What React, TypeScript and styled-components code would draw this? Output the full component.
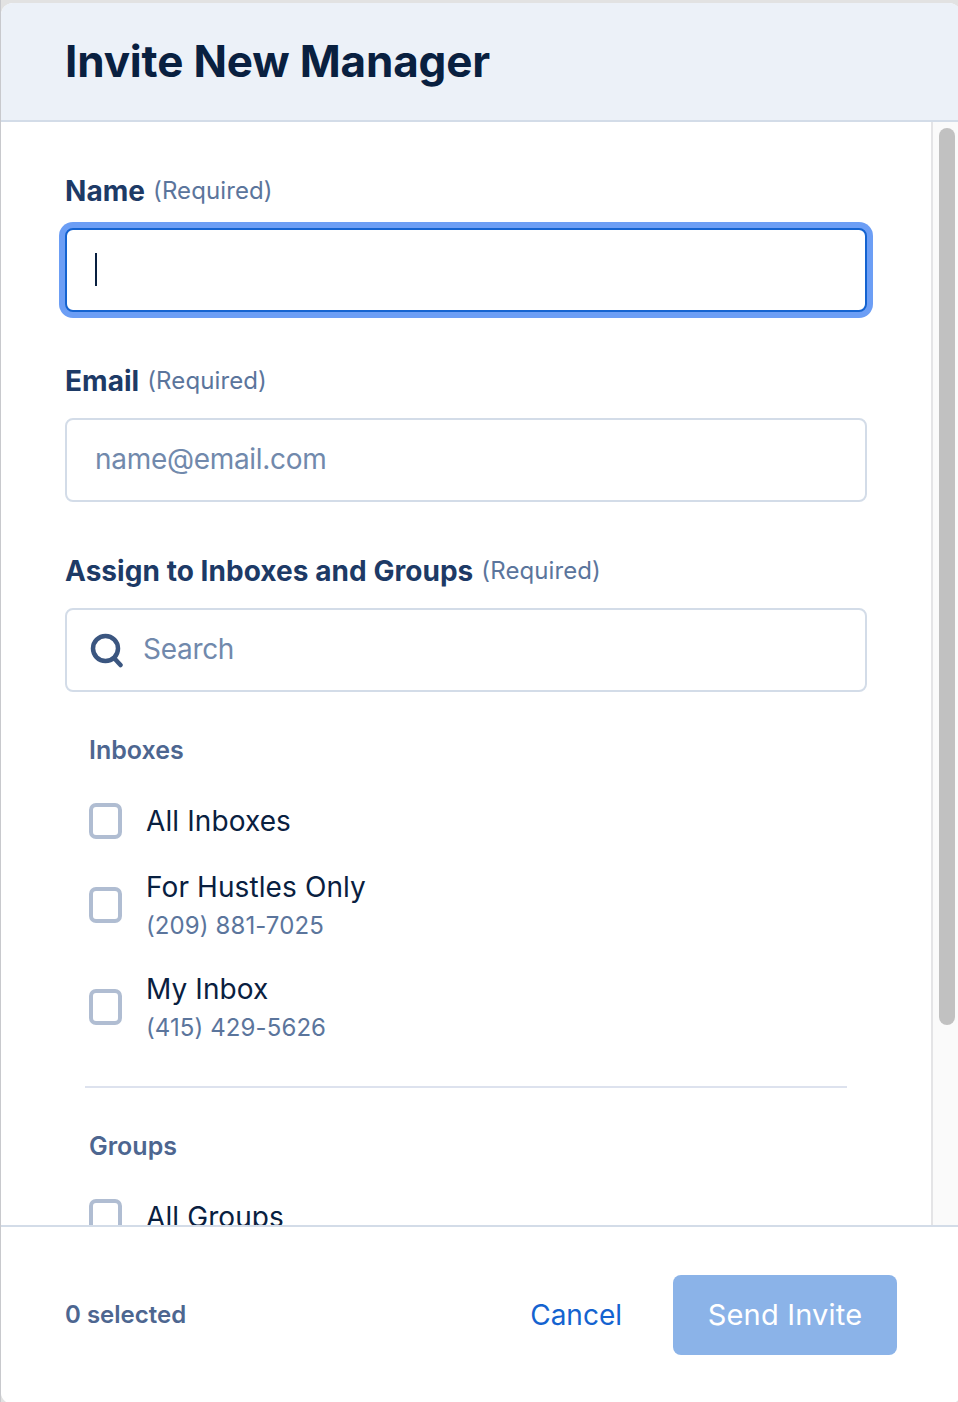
import React from "react";
import styled, { createGlobalStyle } from "styled-components";

const GlobalStyle = createGlobalStyle`
    html, body {
        margin: 0;
        padding: 0;
        height: 1402px;
        overflow: hidden;
        background-color: #e2e2e2;
        font-family: Inter, "Noto Sans", sans-serif;
    }
    * {
        box-sizing: border-box;
    }
`;

const Page = styled.div`
    height: 1402px;
    padding-top: 3px;
    border-left: 1px solid #c8c9cd;
    overflow: hidden;
`;

const Modal = styled.div`
    display: flex;
    flex-direction: column;
    width: 960px;
    height: 1401px;
    background-color: #fff;
    border-radius: 12px;
    overflow: hidden;
`;

const Header = styled.div`
    display: flex;
    align-items: center;
    flex: none;
    height: 119px;
    padding: 0 0 1px 64px;
    background-color: #ecf1f8;
    border-bottom: 2px solid #d3dce8;
`;

const Title = styled.h1`
    margin: 0;
    font-size: 44px;
    font-weight: 700;
    letter-spacing: -0.17px;
    color: #092040;
`;

const Middle = styled.div`
    display: flex;
    flex: 1;
    min-height: 0;
`;

const Content = styled.div`
    flex: 1;
    min-width: 0;
    padding: 50px 64px 0;
    overflow: hidden;
`;

const ScrollTrack = styled.div`
    flex: none;
    width: 30px;
    padding: 6px 0 0 6px;
    background-color: #fafafa;
    border-left: 2px solid #e4e4e6;
`;

const ScrollThumb = styled.div`
    width: 16px;
    height: 897px;
    background-color: #c1c1c1;
    border-radius: 8px;
`;

const Field = styled.div`
    margin-bottom: 50px;
`;

const LabelRow = styled.div`
    display: flex;
    align-items: center;
    gap: 8px;
    height: 36px;
    margin-bottom: 20px;
    padding-top: 2px;
`;

const LabelText = styled.span`
    font-size: 28px;
    font-weight: 700;
    letter-spacing: 0.05px;
    color: #1d3a66;
`;

const Required = styled.span`
    margin-bottom: 2px;
    font-size: 24px;
    letter-spacing: 0.1px;
    color: #5b759c;
`;

const InputBox = styled.div<{ $focused?: boolean }>`
    display: flex;
    align-items: center;
    width: 802px;
    height: 84px;
    padding: 0 28px;
    background-color: #fff;
    border: 2px solid ${(p) => (p.$focused ? "#1463d0" : "#d3dce8")};
    border-radius: 8px;
    box-shadow: ${(p) => (p.$focused ? "0 0 0 6px #6c9ef5" : "none")};
`;

const Caret = styled.div`
    width: 2px;
    height: 33px;
    margin-top: -2px;
    background-color: #092040;
`;

const Placeholder = styled.span`
    margin-bottom: 2px;
    font-size: 28px;
    letter-spacing: -0.3px;
    color: #7189ac;
`;

const SearchIcon = styled.svg`
    flex: none;
    width: 34px;
    height: 36px;
    margin: 0 19px 0 -5px;
`;

const List = styled.div`
    margin-top: -10px;
`;

const SectionTitle = styled.div`
    height: 36px;
    margin: 0 0 20px 24px;
    font-size: 25px;
    line-height: 36px;
    font-weight: 600;
    color: #4d6690;
`;

const Row = styled.div`
    display: flex;
    align-items: center;
    gap: 25px;
    padding: 13px 0 13px 24px;
`;

const Checkbox = styled.div`
    flex: none;
    width: 33px;
    height: 36px;
    background-color: #fff;
    border: 4px solid #b0bdd2;
    border-radius: 7px;
`;

const RowText = styled.div`
    margin-left: -1px;
`;

const RowName = styled.div`
    font-size: 28px;
    line-height: 40px;
    letter-spacing: 0.1px;
    color: #092040;
`;

const RowPhone = styled.div`
    padding-top: 2px;
    font-size: 24px;
    line-height: 34px;
    letter-spacing: 0.1px;
    color: #5b759c;
`;

const Divider = styled.div`
    width: 762px;
    height: 2px;
    margin: 28px 0 40px 20px;
    background-color: #dde2ee;
`;

const Footer = styled.div`
    display: flex;
    align-items: center;
    flex: none;
    height: 179px;
    padding: 0 64px 2px 64px;
    background-color: #fff;
    border-top: 2px solid #d3dce8;
`;

const Selected = styled.div`
    flex: 1;
    font-size: 24px;
    font-weight: 600;
    color: #4d6690;
`;

const CancelButton = styled.button`
    margin-right: 51px;
    padding: 0;
    background: none;
    border: none;
    font-family: inherit;
    font-size: 28px;
    color: #1463d0;
`;

const SendButton = styled.button`
    width: 224px;
    height: 80px;
    background-color: #8bb3e8;
    border: none;
    border-radius: 8px;
    font-family: inherit;
    font-size: 29px;
    letter-spacing: 0.2px;
    color: #fff;
`;

const inboxes = [
    { name: "All Inboxes" },
    { name: "For Hustles Only", phone: "(209) 881-7025" },
    { name: "My Inbox", phone: "(415) 429-5626" },
];

export default function App() {
    return (
        <Page>
            <GlobalStyle />
            <Modal>
                <Header>
                    <Title>Invite New Manager</Title>
                </Header>
                <Middle>
                    <Content>
                        <Field>
                            <LabelRow>
                                <LabelText>Name</LabelText>
                                <Required>(Required)</Required>
                            </LabelRow>
                            <InputBox $focused>
                                <Caret />
                            </InputBox>
                        </Field>
                        <Field>
                            <LabelRow>
                                <LabelText>Email</LabelText>
                                <Required>(Required)</Required>
                            </LabelRow>
                            <InputBox>
                                <Placeholder>name@email.com</Placeholder>
                            </InputBox>
                        </Field>
                        <Field>
                            <LabelRow>
                                <LabelText>Assign to Inboxes and Groups</LabelText>
                                <Required>(Required)</Required>
                            </LabelRow>
                            <InputBox>
                                <SearchIcon viewBox="0 0 34 36" fill="none">
                                    <circle cx="15.5" cy="16.5" r="12.5" stroke="#3b5680" strokeWidth="4.5" />
                                    <path d="M24 26l6.5 7" stroke="#3b5680" strokeWidth="4.5" strokeLinecap="round" />
                                </SearchIcon>
                                <Placeholder>Search</Placeholder>
                            </InputBox>
                        </Field>
                        <List>
                            <SectionTitle>Inboxes</SectionTitle>
                            {inboxes.map((inbox) => (
                                <Row key={inbox.name}>
                                    <Checkbox />
                                    <RowText>
                                        <RowName>{inbox.name}</RowName>
                                        {inbox.phone && <RowPhone>{inbox.phone}</RowPhone>}
                                    </RowText>
                                </Row>
                            ))}
                            <Divider />
                            <SectionTitle>Groups</SectionTitle>
                            <Row>
                                <Checkbox />
                                <RowText>
                                    <RowName>All Groups</RowName>
                                </RowText>
                            </Row>
                        </List>
                    </Content>
                    <ScrollTrack>
                        <ScrollThumb />
                    </ScrollTrack>
                </Middle>
                <Footer>
                    <Selected>0 selected</Selected>
                    <CancelButton>Cancel</CancelButton>
                    <SendButton>Send Invite</SendButton>
                </Footer>
            </Modal>
        </Page>
    );
}
